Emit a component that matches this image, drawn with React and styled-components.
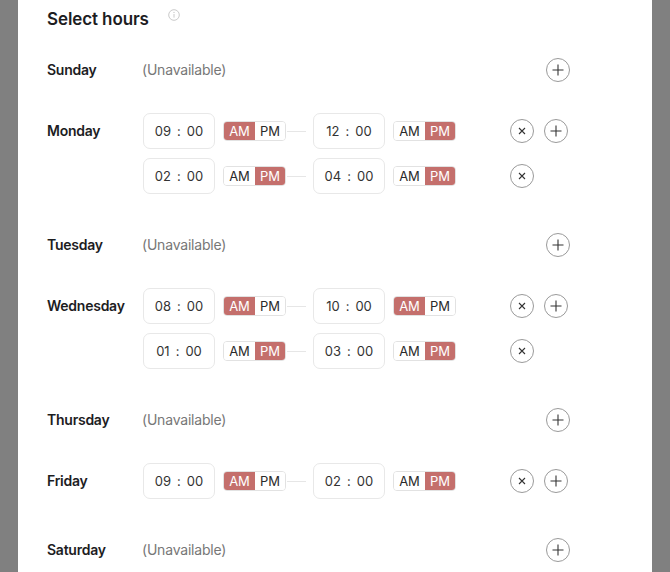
import React from "react";
import styled, { createGlobalStyle } from "styled-components";

const GlobalStyle = createGlobalStyle`
  html, body {
    margin: 0;
    padding: 0;
    background: #808080;
    font-family: Inter, "Noto Sans", "Liberation Sans", sans-serif;
    -webkit-font-smoothing: antialiased;
  }
`;

const Page = styled.div`
  width: 670px;
  height: 572px;
  overflow: hidden;
  padding: 0 18px;
  box-sizing: border-box;
  background: #808080;
`;

const Panel = styled.div`
  background: #fff;
  min-height: 572px;
  padding: 0 0 40px 29px;
  box-sizing: border-box;
`;

const Header = styled.div`
  display: flex;
  align-items: flex-start;
  height: 38px;
`;

const Title = styled.h2`
  margin: 0;
  font-size: 17px;
  line-height: 38px;
  font-weight: 600;
  color: #1d1d1f;
  letter-spacing: -0.1px;
`;

const InfoIcon = styled.span`
  display: inline-flex;
  margin: 9px 0 0 19px;
  color: #c4c4c4;
`;

const DayList = styled.div`
  display: flex;
  flex-direction: column;
  gap: 25px;
  margin-top: 14px;
`;

const DayRow = styled.div`
  display: grid;
  grid-template-columns: 96px 367px 60px;
  align-items: start;
  padding-bottom: ${(p) => (p.$open ? "8px" : "0")};
`;

const DayName = styled.div`
  font-size: 14px;
  font-weight: 600;
  line-height: 36px;
  letter-spacing: -0.25px;
  color: #1d1d1f;
`;

const Slots = styled.div`
  display: flex;
  flex-direction: column;
  gap: 9px;
`;

const Unavailable = styled.div`
  font-size: 14px;
  line-height: 36px;
  letter-spacing: -0.2px;
  color: #777;
  margin-left: -1px;
`;

const SlotRow = styled.div`
  display: flex;
  align-items: center;
  height: 36px;
`;

const TimeBox = styled.div`
  width: 72px;
  height: 36px;
  box-sizing: border-box;
  border: 1px solid #e8e8e8;
  border-radius: 7px;
  display: flex;
  align-items: center;
  justify-content: center;
  gap: 6px;
  font-size: 13px;
  color: #333;
`;

const Toggle = styled.div`
  display: flex;
  height: 20px;
  margin-left: 8px;
  border: 1px solid #e2e2e2;
  border-radius: 4px;
  overflow: hidden;
  box-sizing: border-box;
`;

const Segment = styled.span`
  width: ${(p) => (p.$first ? "31px" : "30px")};
  display: flex;
  align-items: center;
  justify-content: center;
  font-size: 13px;
  line-height: 1;
  color: ${(p) => (p.$active ? "#fff" : "#2a2a2a")};
  background: ${(p) => (p.$active ? "#c46f6c" : "#fff")};
`;

const Connector = styled.span`
  width: 19px;
  height: 1px;
  background: #e6e6e6;
  margin: 0 7px 0 1px;
`;

const Actions = styled.div`
  display: flex;
  gap: 10px;
  height: 36px;
  align-items: center;
  justify-content: ${(p) => (p.$end ? "flex-end" : "flex-start")};
`;

const RoundButton = styled.button`
  width: 24px;
  height: 24px;
  padding: 0;
  border: 1px solid #9a9a9a;
  border-radius: 50%;
  background: #fff;
  color: #333;
  display: flex;
  align-items: center;
  justify-content: center;
  cursor: pointer;
`;

const PlusIcon = () => (
  <svg width="12" height="12" viewBox="0 0 12 12">
    <path d="M6 0.5v11M0.5 6h11" stroke="currentColor" strokeWidth="1.1" />
  </svg>
);

const CrossIcon = () => (
  <svg width="8" height="8" viewBox="0 0 8 8">
    <path d="M1 1l6 6M7 1l-6 6" stroke="currentColor" strokeWidth="1.1" />
  </svg>
);

const days = [
  { name: "Sunday", slots: [] },
  {
    name: "Monday",
    slots: [
      ["09", "AM", "12", "PM"],
      ["02", "PM", "04", "PM"],
    ],
  },
  { name: "Tuesday", slots: [] },
  {
    name: "Wednesday",
    slots: [
      ["08", "AM", "10", "AM"],
      ["01", "PM", "03", "PM"],
    ],
  },
  { name: "Thursday", slots: [] },
  { name: "Friday", slots: [["09", "AM", "02", "PM"]] },
  { name: "Saturday", slots: [] },
];

function Time({ hour }) {
  return (
    <TimeBox>
      <span>{hour}</span>
      <span>:</span>
      <span>00</span>
    </TimeBox>
  );
}

function Meridiem({ value }) {
  return (
    <Toggle>
      <Segment $first $active={value === "AM"}>AM</Segment>
      <Segment $active={value === "PM"}>PM</Segment>
    </Toggle>
  );
}

function Day({ day }) {
  const open = day.slots.length > 0;
  return (
    <DayRow $open={open}>
      <DayName>{day.name}</DayName>
      {open ? (
        <Slots>
          {day.slots.map((s, i) => (
            <SlotRow key={i}>
              <Time hour={s[0]} />
              <Meridiem value={s[1]} />
              <Connector />
              <Time hour={s[2]} />
              <Meridiem value={s[3]} />
            </SlotRow>
          ))}
        </Slots>
      ) : (
        <Unavailable>(Unavailable)</Unavailable>
      )}
      {open ? (
        <Slots>
          {day.slots.map((s, i) => (
            <Actions key={i}>
              <RoundButton>
                <CrossIcon />
              </RoundButton>
              {i === 0 && (
                <RoundButton>
                  <PlusIcon />
                </RoundButton>
              )}
            </Actions>
          ))}
        </Slots>
      ) : (
        <Actions $end>
          <RoundButton>
            <PlusIcon />
          </RoundButton>
        </Actions>
      )}
    </DayRow>
  );
}

export default function App() {
  return (
    <>
      <GlobalStyle />
      <Page>
        <Panel>
          <Header>
            <Title>Select hours</Title>
            <InfoIcon>
              <svg width="12" height="12" viewBox="0 0 12 12" fill="none">
                <circle cx="6" cy="6" r="5.3" stroke="currentColor" strokeWidth="0.9" />
                <path d="M6 5v3.6" stroke="currentColor" strokeWidth="0.9" />
                <circle cx="6" cy="3.4" r="0.6" fill="currentColor" />
              </svg>
            </InfoIcon>
          </Header>
          <DayList>
            {days.map((d) => (
              <Day key={d.name} day={d} />
            ))}
          </DayList>
        </Panel>
      </Page>
    </>
  );
}
